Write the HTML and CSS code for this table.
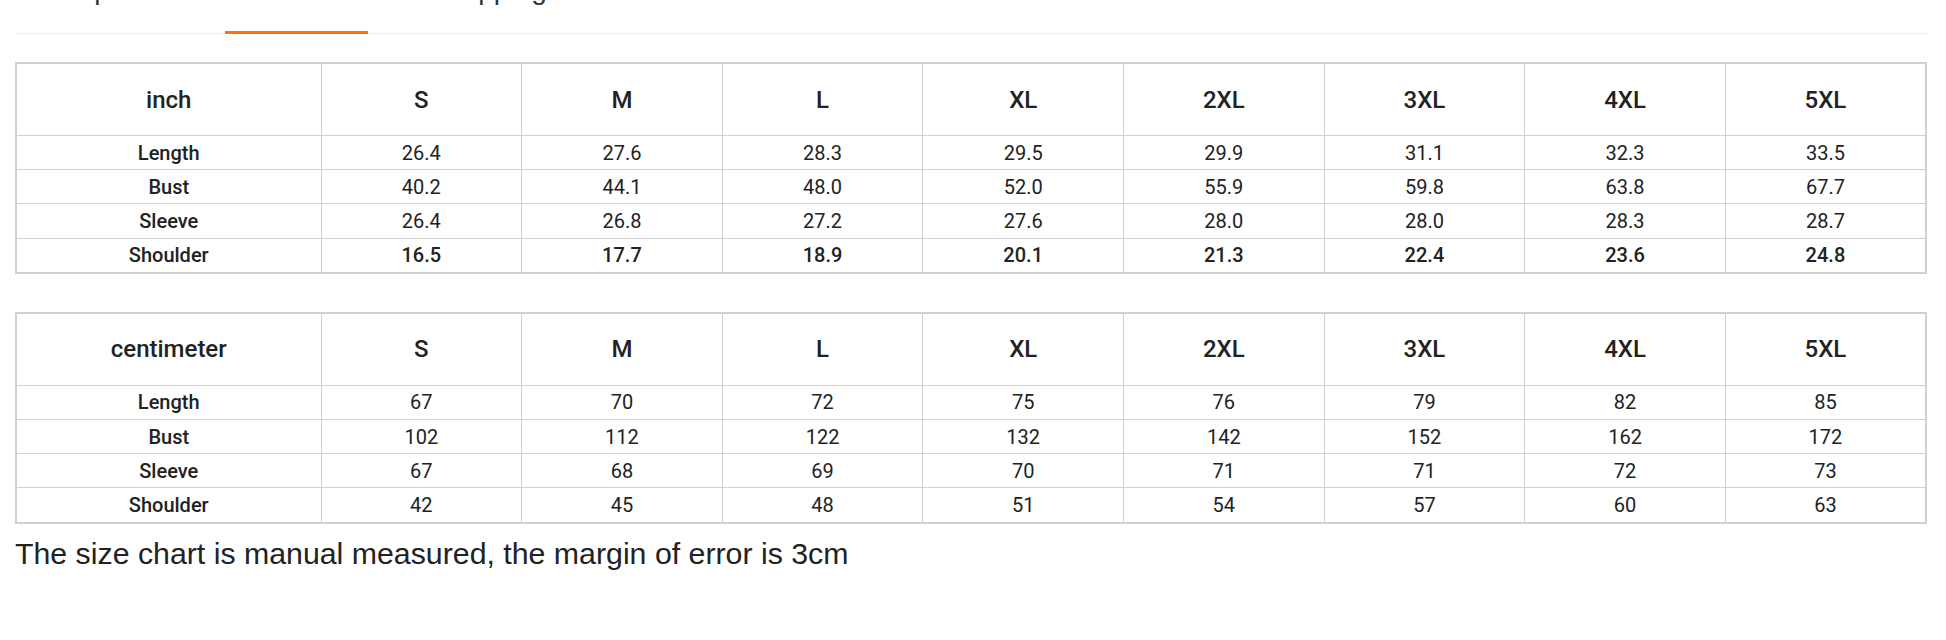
FILE: index.html
```html
<!DOCTYPE html>
<html lang="en">
<head>
<meta charset="utf-8">
<title>Size Chart</title>
<link rel="stylesheet" href="styles.css">
</head>
<body>
<div class="page">
  <nav class="tabs">
    <span class="tab">Description</span>
    <span class="tab active">Size Chart</span>
    <span class="tab">Shipping</span>
    <span class="tab">Customer Reviews</span>
  </nav>

  <table class="chart">
    <colgroup><col class="label-col"><col><col><col><col><col><col><col><col></colgroup>
    <thead>
      <tr><th>inch</th><th>S</th><th>M</th><th>L</th><th>XL</th><th>2XL</th><th>3XL</th><th>4XL</th><th>5XL</th></tr>
    </thead>
    <tbody>
      <tr><th>Length</th><td>26.4</td><td>27.6</td><td>28.3</td><td>29.5</td><td>29.9</td><td>31.1</td><td>32.3</td><td>33.5</td></tr>
      <tr><th>Bust</th><td>40.2</td><td>44.1</td><td>48.0</td><td>52.0</td><td>55.9</td><td>59.8</td><td>63.8</td><td>67.7</td></tr>
      <tr><th>Sleeve</th><td>26.4</td><td>26.8</td><td>27.2</td><td>27.6</td><td>28.0</td><td>28.0</td><td>28.3</td><td>28.7</td></tr>
      <tr class="strong"><th>Shoulder</th><td>16.5</td><td>17.7</td><td>18.9</td><td>20.1</td><td>21.3</td><td>22.4</td><td>23.6</td><td>24.8</td></tr>
    </tbody>
  </table>

  <table class="chart second">
    <colgroup><col class="label-col"><col><col><col><col><col><col><col><col></colgroup>
    <thead>
      <tr><th>centimeter</th><th>S</th><th>M</th><th>L</th><th>XL</th><th>2XL</th><th>3XL</th><th>4XL</th><th>5XL</th></tr>
    </thead>
    <tbody>
      <tr><th>Length</th><td>67</td><td>70</td><td>72</td><td>75</td><td>76</td><td>79</td><td>82</td><td>85</td></tr>
      <tr><th>Bust</th><td>102</td><td>112</td><td>122</td><td>132</td><td>142</td><td>152</td><td>162</td><td>172</td></tr>
      <tr><th>Sleeve</th><td>67</td><td>68</td><td>69</td><td>70</td><td>71</td><td>71</td><td>72</td><td>73</td></tr>
      <tr><th>Shoulder</th><td>42</td><td>45</td><td>48</td><td>51</td><td>54</td><td>57</td><td>60</td><td>63</td></tr>
    </tbody>
  </table>

  <p class="note">The size chart is manual measured, the margin of error is 3cm</p>
</div>
</body>
</html>
```

FILE: styles.css
```css
html, body {
  margin: 0;
  padding: 0;
  background: #fff;
}

.page {
  margin-left: 15px;
  width: 1912px;
}

.tabs {
  display: flex;
  gap: 64px;
  margin-top: -24px;
  border-bottom: 1px solid #ebebeb;
  font-family: "Liberation Sans", Arial, sans-serif;
  font-size: 28px;
  line-height: 28px;
  color: #333;
}

.tab {
  padding: 0 6px 27px;
  border-bottom: 3px solid transparent;
  margin-bottom: -1px;
}

.tab:first-child {
  margin-left: -6px;
}

.tab.active {
  color: #ff7010;
  border-bottom-color: #ff7010;
}

.chart {
  width: 100%;
  table-layout: fixed;
  border-collapse: collapse;
  border: 2px solid #d0d0d0;
  margin-top: 28px;
  font-family: Roboto, "Liberation Sans", sans-serif;
  color: #222;
  text-align: center;
}

.chart.second {
  margin-top: 38px;
}

.label-col {
  width: 305px;
}

.chart th,
.chart td {
  border: 1px solid #d0d0d0;
  padding: 0;
  vertical-align: middle;
}

.chart thead th {
  height: 71px;
  font-size: 24px;
  font-weight: 500;
}

.chart tbody th,
.chart tbody td {
  height: 33.2px;
  font-size: 20px;
}

.chart tbody th {
  font-weight: 500;
}

.chart tbody td {
  font-weight: 400;
}

.chart tr.strong td {
  font-weight: 500;
}

.note {
  margin: 12px 0 0;
  font-family: "Liberation Sans", Arial, sans-serif;
  font-size: 30.3px;
  line-height: 35px;
  color: #222;
}
```
